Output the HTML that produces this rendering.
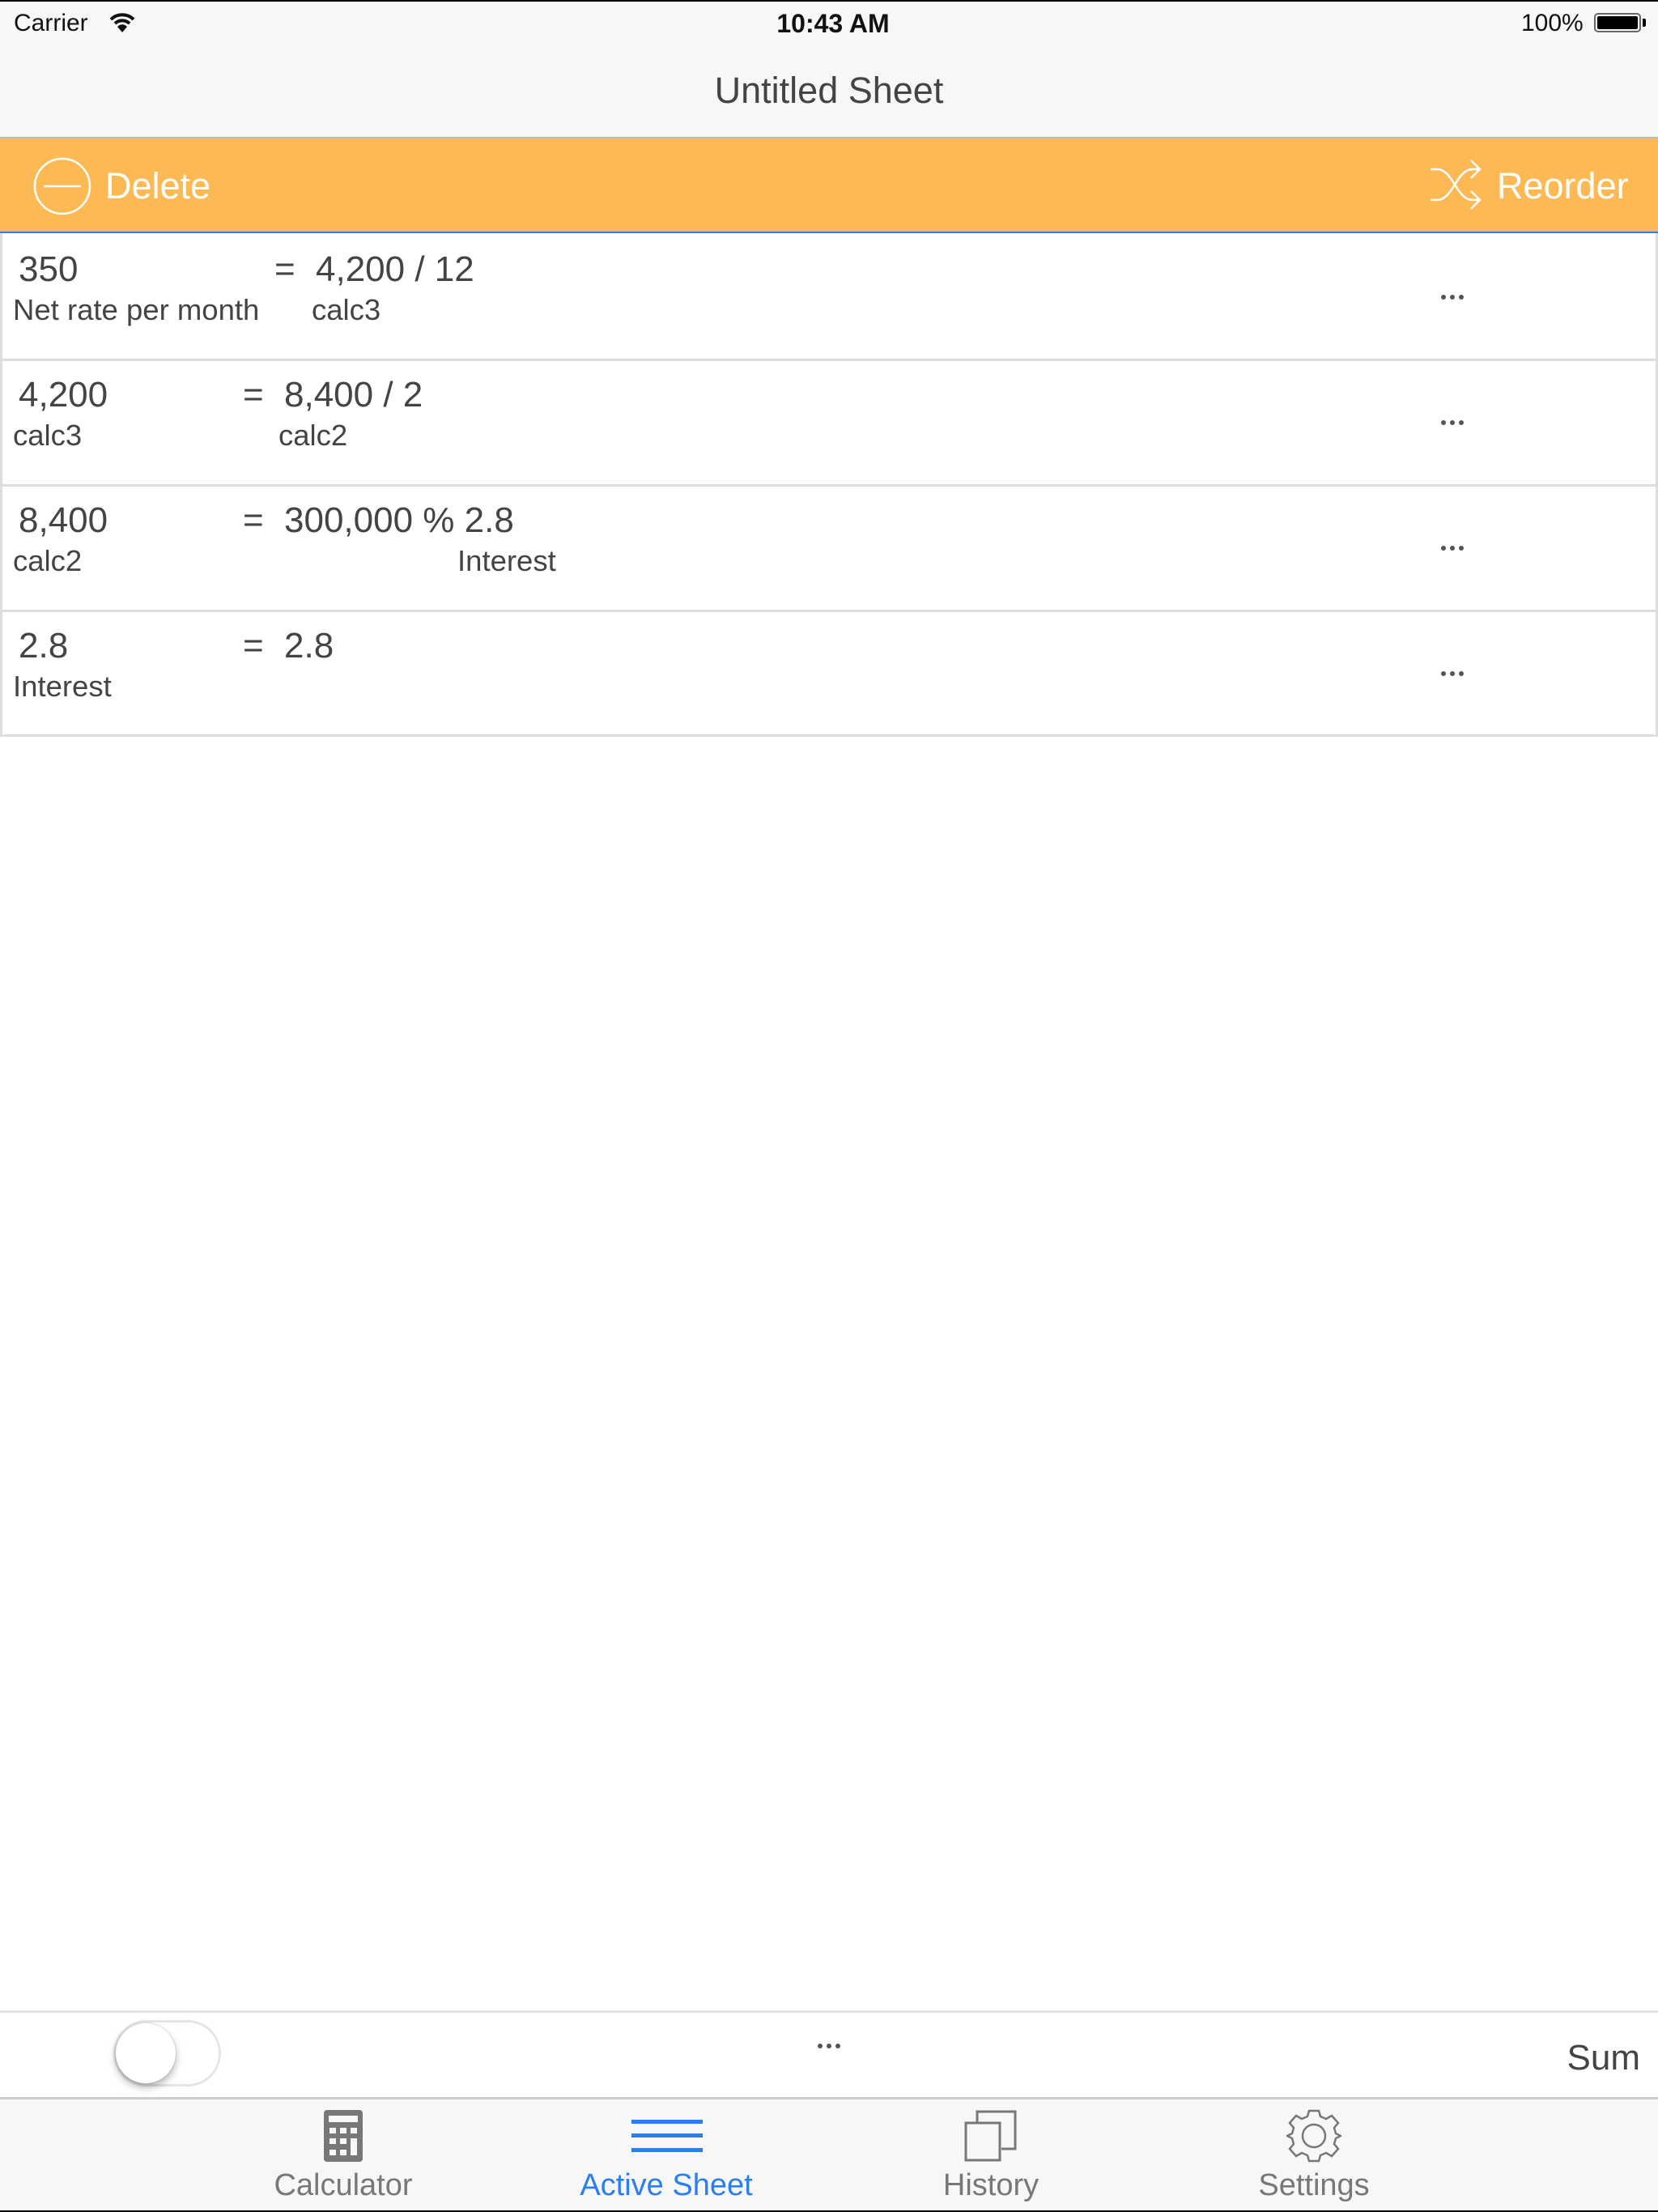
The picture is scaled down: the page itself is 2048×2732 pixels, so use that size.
<!DOCTYPE html>
<html><head><meta charset="utf-8"><style>
*{margin:0;padding:0;box-sizing:border-box}
body{width:2048px;height:2732px;position:relative;background:#fff;font-family:"Liberation Sans",sans-serif;overflow:hidden;color:#444}
.a{position:absolute;white-space:nowrap}
.v{font-size:44px;color:#444}
.l{font-size:36.5px;color:#444}
.dots{position:absolute;width:28px;height:6px}
.dots i{position:absolute;top:0;width:6px;height:6px;border-radius:50%;background:#555}
</style></head><body>
<div class="a" style="left:0;top:0;width:2048px;height:170px;background:#f7f7f7;border-top:2px solid #000"></div>
<div class="a" style="left:17px;top:12px;font-size:30px;color:#111">Carrier</div>
<svg class="a" style="left:135px;top:15px" width="32" height="26" viewBox="0 0 32 26"><path d="M2 9 A20 20 0 0 1 30 9" stroke="#111" stroke-width="4" fill="none"/><path d="M7 14 A13 13 0 0 1 25 14" stroke="#111" stroke-width="4" fill="none"/><path d="M16 25 L10 18 A8 8 0 0 1 22 18 Z" fill="#111"/></svg>
<div class="a" style="left:0;width:2058px;text-align:center;top:11px;font-size:32px;font-weight:bold;color:#111">10:43 AM</div>
<div class="a" style="left:1879px;top:12px;font-size:30px;color:#111">100%</div>
<div class="a" style="left:1969px;top:16px;width:58px;height:24px;border:2px solid #666;border-radius:5px;padding:2px"><div style="width:100%;height:100%;background:#000;border-radius:2px"></div></div>
<div class="a" style="left:2029px;top:23px;width:4px;height:10px;background:#000;border-radius:0 2px 2px 0"></div>
<div class="a" style="left:0;width:2048px;text-align:center;top:86px;font-size:45px;color:#444">Untitled Sheet</div>
<div class="a" style="left:0;top:169px;width:2048px;height:2px;background:#bbb"></div>
<div class="a" style="left:0;top:171px;width:2048px;height:116px;background:#fdb953"></div>
<div class="a" style="left:0;top:286px;width:2048px;height:2px;background:#2a7ef0"></div>
<svg class="a" style="left:40px;top:193px" width="74" height="74"><circle cx="37" cy="37" r="34" stroke="#fff" stroke-width="2.5" fill="none"/><line x1="14" y1="37" x2="60" y2="37" stroke="#fff" stroke-width="2.5"/></svg>
<div class="a" style="left:130px;top:204px;font-size:45px;color:#fff">Delete</div>
<svg class="a" style="left:1765px;top:195px" width="70" height="68" viewBox="0 0 70 68"><g stroke="#fff" stroke-width="2.5" fill="none"><path d="M2 14 H10 C30 14 34 52 54 52 H62"/><path d="M2 52 H10 C30 52 34 14 54 14 H62"/><path d="M52 3 L63 14 L52 25"/><path d="M52 41 L63 52 L52 63"/></g></svg>
<div class="a" style="left:1849px;top:204px;font-size:45px;color:#fff">Reorder</div>
<!-- rows -->
<div class="a" style="left:0;top:288px;width:2048px;height:622px;border-left:3px solid #ddd;border-right:3px solid #ddd"></div>
<div class="a" style="left:0;top:443px;width:2048px;height:3px;background:#ddd"></div>
<div class="a" style="left:0;top:598px;width:2048px;height:3px;background:#ddd"></div>
<div class="a" style="left:0;top:753px;width:2048px;height:3px;background:#ddd"></div>
<div class="a" style="left:0;top:907px;width:2048px;height:3px;background:#ddd"></div>

<div class="a v" style="left:23px;top:308px">350</div>
<div class="a v" style="left:339px;top:308px">=</div>
<div class="a v" style="left:390px;top:308px">4,200 / 12</div>
<div class="a l" style="left:16px;top:362px">Net rate per month</div>
<div class="a l" style="left:385px;top:362px">calc3</div>
<div class="dots" style="left:1780px;top:364px"><i style="left:0"></i><i style="left:11px"></i><i style="left:22px"></i></div>

<div class="a v" style="left:23px;top:463px">4,200</div>
<div class="a v" style="left:300px;top:463px">=</div>
<div class="a v" style="left:351px;top:463px">8,400 / 2</div>
<div class="a l" style="left:16px;top:517px">calc3</div>
<div class="a l" style="left:344px;top:517px">calc2</div>
<div class="dots" style="left:1780px;top:519px"><i style="left:0"></i><i style="left:11px"></i><i style="left:22px"></i></div>

<div class="a v" style="left:23px;top:618px">8,400</div>
<div class="a v" style="left:300px;top:618px">=</div>
<div class="a v" style="left:351px;top:618px">300,000 % 2.8</div>
<div class="a l" style="left:16px;top:672px">calc2</div>
<div class="a l" style="left:565px;top:672px">Interest</div>
<div class="dots" style="left:1780px;top:674px"><i style="left:0"></i><i style="left:11px"></i><i style="left:22px"></i></div>

<div class="a v" style="left:23px;top:773px">2.8</div>
<div class="a v" style="left:300px;top:773px">=</div>
<div class="a v" style="left:351px;top:773px">2.8</div>
<div class="a l" style="left:16px;top:827px">Interest</div>
<div class="dots" style="left:1780px;top:829px"><i style="left:0"></i><i style="left:11px"></i><i style="left:22px"></i></div>

<!-- toolbar -->
<div class="a" style="left:0;top:2483px;width:2048px;height:3px;background:#e3e3e3"></div>
<div class="a" style="left:140px;top:2495px;width:133px;height:82px;border:3px solid #e5e5e5;border-radius:41px;background:#fff"></div>
<div class="a" style="left:143px;top:2499px;width:74px;height:74px;border-radius:50%;background:#fff;box-shadow:0 5px 10px rgba(0,0,0,.3),0 0 2px rgba(0,0,0,.2)"></div>
<div class="dots" style="left:1010px;top:2524px"><i style="left:0"></i><i style="left:11px"></i><i style="left:22px"></i></div>
<div class="a" style="right:22px;top:2517px;font-size:44px;color:#444">Sum</div>
<!-- tab bar -->
<div class="a" style="left:0;top:2590px;width:2048px;height:142px;background:#f7f7f7;border-top:3px solid #ccc;border-bottom:2px solid #000"></div>
<svg class="a" style="left:400px;top:2606px" width="48" height="64" viewBox="0 0 48 64"><rect x="0" y="0" width="48" height="64" rx="4" fill="#777"/><rect x="6" y="7" width="36" height="8" fill="#f7f7f7"/><g fill="#f7f7f7"><rect x="7" y="22" width="8" height="7"/><rect x="20" y="22" width="8" height="7"/><rect x="33" y="22" width="8" height="7"/><rect x="7" y="35" width="8" height="7"/><rect x="20" y="35" width="8" height="7"/><rect x="33" y="35" width="8" height="21"/><rect x="7" y="49" width="8" height="7"/><rect x="20" y="49" width="8" height="7"/></g></svg>
<div class="a" style="left:324px;width:200px;text-align:center;top:2678px;font-size:38px;color:#777">Calculator</div>
<svg class="a" style="left:780px;top:2618px" width="88" height="40"><rect x="0" y="0" width="88" height="5" fill="#2a7ef0"/><rect x="0" y="17" width="88" height="5" fill="#2a7ef0"/><rect x="0" y="35" width="88" height="5" fill="#2a7ef0"/></svg>
<div class="a" style="left:673px;width:300px;text-align:center;top:2678px;font-size:38px;color:#2a7ef0">Active Sheet</div>
<svg class="a" style="left:1191px;top:2606px" width="66" height="64"><g stroke="#777" stroke-width="3" fill="none"><rect x="2" y="16" width="42" height="46"/><path d="M16 15 V2 H63 V48 H46"/></g></svg>
<div class="a" style="left:1124px;width:200px;text-align:center;top:2678px;font-size:38px;color:#777">History</div>
<svg class="a" style="left:1589px;top:2604px" width="68" height="68" viewBox="-34 -34 68 68"><g stroke="#777" stroke-width="2.5" fill="none"><circle r="14"/><path d="M-6,-31 L6,-31 L8,-24 L15,-21 L22,-25 L30,-16 L25,-10 L27,-3 L33,0 L27,3 L25,10 L30,16 L22,25 L15,21 L8,24 L6,31 L-6,31 L-8,24 L-15,21 L-22,25 L-30,16 L-25,10 L-27,3 L-33,0 L-27,-3 L-25,-10 L-30,-16 L-22,-25 L-15,-21 L-8,-24 Z"/></g></svg>
<div class="a" style="left:1523px;width:200px;text-align:center;top:2678px;font-size:38px;color:#777">Settings</div>
</body></html>
